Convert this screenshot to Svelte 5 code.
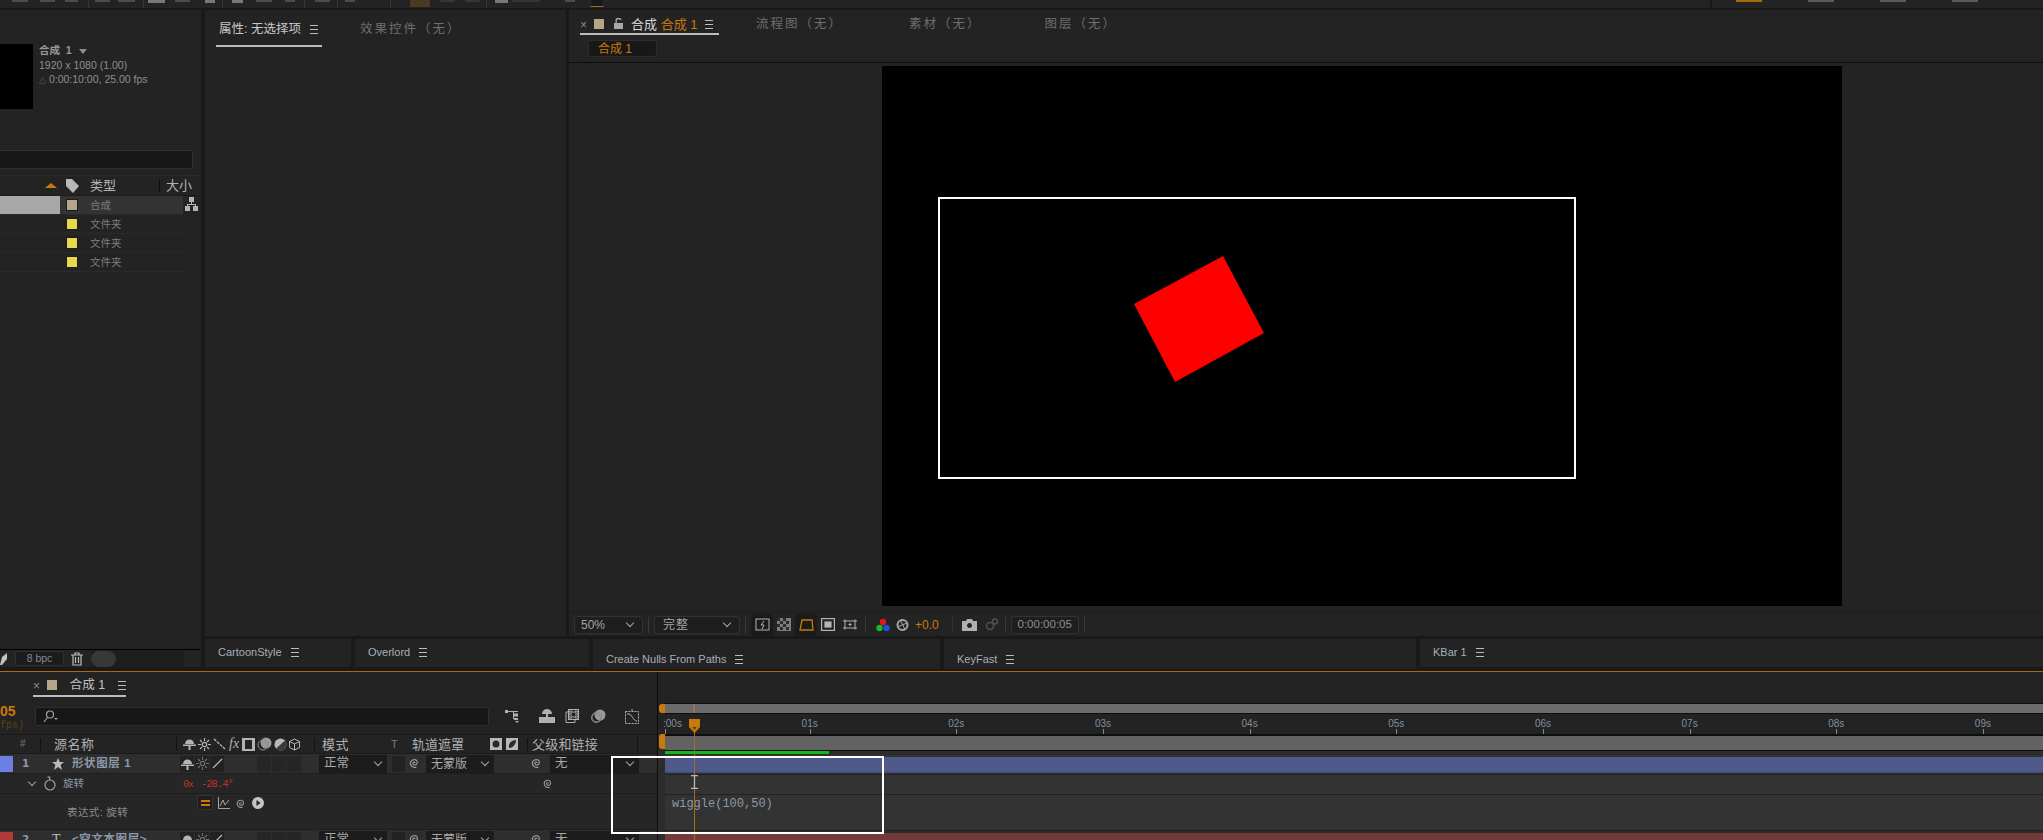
<script>
	const projectRows = [
		{ type: '合成', color: '#b5a68a', selected: true },
		{ type: '文件夹', color: '#e6d94a' },
		{ type: '文件夹', color: '#e6d94a' },
		{ type: '文件夹', color: '#e6d94a' }
	];
	const seconds = ['01s', '02s', '03s', '04s', '05s', '06s', '07s', '08s', '09s'];
	// bits of the top toolbar that stay visible above the crop: [start x, width, kind]
	const topBits = [
		[12, 16, ''], [40, 15, ''], [65, 13, ''], [88, 1, 'sep'], [95, 15, ''], [118, 17, ''], [143, 1, 'sep'],
		[148, 17, 'hi'], [175, 15, ''], [205, 10, 'hi'], [222, 1, 'sep'], [232, 11, 'hi'], [256, 16, ''], [285, 10, ''],
		[304, 1, 'sep'], [315, 15, ''], [337, 1, 'sep'], [345, 10, ''], [390, 1, 'sep'], [410, 20, 'brown'], [440, 15, 'dim'],
		[465, 15, 'dim'], [486, 1, 'sep'], [495, 13, 'hi'], [512, 28, 'dim'], [565, 10, '']
	];
	const placedBits = topBits.map(([x, w, kind], i) => {
		const prev = i ? topBits[i - 1][0] + topBits[i - 1][1] : 0;
		return { gap: x - prev, w, kind };
	});
</script>

{#snippet spiral(size)}
	<svg width={size} height={size} viewBox="0 0 14 14" fill="none" stroke="#9a9a9a" stroke-width="1.3">
		<path d="M7.5 7.5c0-1.2-2-1.2-2.2.3-.2 1.800 2.600 2.600 4 1 1.500-1.700.6-5-2.300-5C4 3.800 2.300 6 2.600 8.500 3 11.300 6 12.800 9 12" />
	</svg>
{/snippet}

{#snippet shy()}
	<svg width="13" height="12" viewBox="0 0 13 12" fill="#b4b4b4">
		<path d="M2 6a4.500 4.500 0 0 1 9 0z" /><rect x="0" y="6.500" width="13" height="1.500" /><rect x="5.500" y="8" width="2" height="4" />
	</svg>
{/snippet}

{#snippet sun(color)}
	<svg width="13" height="13" viewBox="0 0 13 13" fill="none" stroke={color} stroke-width="1.200">
		<circle cx="6.500" cy="6.500" r="2.200" /><path d="M6.500 0v3M6.500 10v3M0 6.500h3M10 6.500h3M2 2l2 2M9 9l2 2M2 11l2-2M9 4l2-2" />
	</svg>
{/snippet}

<div class="app">
	<div class="topbar">
		{#each placedBits as bit}
			<span class="bit {bit.kind}" style="margin-left: {bit.gap}px; width: {bit.w}px"></span>
		{/each}
		<span class="orange-box"></span>
		<span class="tb-right"><i class="o"></i><i></i><i></i><i></i></span>
	</div>

	<div class="main">
		<section class="panel project">
			<div class="info">
				<div class="thumb"></div>
				<div class="info-text">
					<div class="info-name">合成&nbsp; 1 <span class="caret"></span></div>
					<div>1920 x 1080 (1.00)</div>
					<div><span class="delta">△</span> 0:00:10:00, 25.00 fps</div>
				</div>
			</div>
			<div class="project-search"></div>
			<div class="project-head">
				<span class="sort"></span>
				<svg class="tag" width="13" height="14" viewBox="0 0 13 14" fill="#b8b8b8"><path d="M0 0h6l7 7-6 7-7-7z" /></svg>
				<span class="ptype">类型</span>
				<span class="psize">大小</span>
			</div>
			{#each projectRows as row}
				<div class="project-row" class:selected={row.selected}>
					<span class="pname"></span>
					<span class="pswatch" style="background: {row.color}"></span>
					<span class="ptext">{row.type}</span>
				</div>
			{/each}
			<svg class="tree" width="13" height="14" viewBox="0 0 13 14" fill="#b4b4b4">
				<rect x="4" y="0" width="5" height="5" /><rect x="0" y="9" width="5" height="5" /><rect x="8" y="9" width="5" height="5" /><path d="M6 5h1v2h4v2h-1V8H3v1H2V7h4z" />
			</svg>
			<div class="project-foot">
				<svg class="leaf" width="7" height="12" viewBox="0 0 7 12" fill="#c4c4c4"><path d="M7 0v6L2 12H0l2-8z" /></svg>
				<span class="bpc">8 bpc</span>
				<svg width="12" height="14" viewBox="0 0 12 14" fill="none" stroke="#bdbdbd" stroke-width="1.200">
					<path d="M0 3h12M4 3V1h4v2M2 3v10h8V3M4.500 5v6M7.500 5v6" />
				</svg>
				<span class="foot-strip"><span class="pill"></span></span>
			</div>
		</section>

		<div class="right">
			<div class="upper">
				<section class="panel props">
					<div class="prop-tabs">
						<span class="tab active prop-active">属性: 无选择项 <i class="menu"></i></span>
						<span class="tab-dim effect">效果控件（无）</span>
					</div>
				</section>

				<section class="panel viewer">
					<div class="viewer-tabs">
						<span class="tab active comp-tab">
							<span class="close">×</span>
							<span class="swatch"></span>
							<svg width="9" height="11" viewBox="0 0 9 11" fill="#a8a8a8"><path d="M0 5h9v6H0zM1.500 5V2.500a3 2.500 0 0 1 6-.5H6.200a1.800 1.300 0 0 0-3.400.5V5z" /></svg>
							<span class="comp-label">合成 <b>合成 1</b></span>
							<i class="menu"></i>
						</span>
						<span class="tab-dim flow">流程图（无）</span>
						<span class="tab-dim footage">素材（无）</span>
						<span class="tab-dim layer-tab">图层（无）</span>
					</div>
					<div class="crumb-row"><span class="crumb">合成 1</span></div>
					<div class="canvas">
						<div class="comp">
							<div class="comp-frame"></div>
							<svg class="shape" width="132" height="128" viewBox="0 0 132 128"><polygon points="89,0 130,77 41,126 0,48" fill="#ff0000" /></svg>
						</div>
					</div>
					<div class="viewer-tools">
						<span class="select zoom-sel">50%<i class="chev"></i></span>
						<span class="vsep"></span>
						<span class="select quality">完整<i class="chev"></i></span>
						<span class="vsep"></span>
						<span class="tool on">
							<svg width="15" height="14" viewBox="0 0 15 14" fill="none" stroke="#b4b4b4"><rect x="1" y="1" width="13" height="11" /><path d="M9 3L6 7h3l-2 4" /></svg>
						</span>
						<span class="tool">
							<svg width="14" height="13" viewBox="0 0 14 13"><rect width="14" height="13" fill="#7c7c7c" /><path d="M0 0h3v3H0zM6 0h3v3H6zM3 3h3v3H3zM9 3h3v3H9zM0 6h3v3H0zM6 6h3v3H6zM3 9h3v3H3zM9 9h3v3H9z" fill="#2c2c2c" /></svg>
						</span>
						<span class="tool on">
							<svg width="15" height="14" viewBox="0 0 15 14" fill="none" stroke="#c87a0a" stroke-width="1.300"><path d="M3 2h10l1 10H1z" /></svg>
						</span>
						<span class="tool">
							<svg width="14" height="13" viewBox="0 0 14 13" fill="none" stroke="#b4b4b4" stroke-width="1.200"><rect x=".6" y=".6" width="12.800" height="11.800" /><rect x="4" y="4" width="6" height="5" fill="#b4b4b4" /></svg>
						</span>
						<span class="tool">
							<svg width="14" height="14" viewBox="0 0 14 14" fill="none" stroke="#b4b4b4"><path d="M2 1.500v10M12 1.500v10M0 3h14M0 10h14M7 5v3M5.500 6.500h3" /></svg>
						</span>
						<span class="vsep tight"></span>
						<svg class="rgb" width="14" height="14" viewBox="0 0 14 14"><circle cx="7" cy="4" r="3.200" fill="#e01818" /><circle cx="3.500" cy="10" r="3.200" fill="#18b828" /><circle cx="10.500" cy="10" r="3.200" fill="#2050e0" /></svg>
						<svg class="aperture" width="13" height="14" viewBox="0 0 13 14" fill="none" stroke="#a4a4a4" stroke-width="2"><circle cx="6.500" cy="7" r="5" /><path d="M4 2l3 5M11 5L6 7M9 12L7 7M2 9l4-2" stroke-width="1" /></svg>
						<span class="exposure">+0.0</span>
						<span class="vsep expo-sep"></span>
						<svg class="camera" width="15" height="12" viewBox="0 0 15 12" fill="#b0b0b0"><path d="M0 2h4l1-2h5l1 2h4v10H0zM7.500 4a2.500 2.500 0 1 0 .01 0z" /></svg>
						<svg class="snap" width="15" height="13" viewBox="0 0 15 13" fill="none" stroke="#505050" stroke-width="1.500"><circle cx="6" cy="8" r="3.500" /><circle cx="11" cy="3.500" r="2.500" /></svg>
						<span class="vsep snap-sep"></span>
						<span class="timecode">0:00:00:05</span>
						<span class="vsep"></span>
					</div>
				</section>
			</div>

			<div class="docks">
				<div class="dock cartoon">CartoonStyle <i class="menu"></i></div>
				<div class="dock overlord">Overlord <i class="menu"></i></div>
				<div class="dock tall nulls">Create Nulls From Paths <i class="menu"></i></div>
				<div class="dock tall keyfast">KeyFast <i class="menu"></i></div>
				<div class="dock kbar">KBar 1 <i class="menu"></i></div>
			</div>
		</div>
	</div>

	<section class="timeline">
		<div class="tl-left">
			<div class="tl-tabrow">
				<span class="tab active tl-tab">
					<span class="close">×</span>
					<span class="swatch"></span>
					<span class="tl-name">合成 1</span>
					<i class="menu"></i>
				</span>
			</div>
			<div class="tl-searchrow">
				<div class="tl-time"><b>05</b><small>fps)</small></div>
				<div class="tl-search">
					<svg width="15" height="13" viewBox="0 0 15 13" fill="none" stroke="#a0a0a0" stroke-width="1.200"><circle cx="7" cy="4.500" r="3.500" /><path d="M4.500 7.500L1 12" /><path d="M11 8h4l-2 2z" fill="#a0a0a0" stroke="none" /></svg>
				</div>
				<svg class="ti ti-flow" width="15" height="14" viewBox="0 0 15 14" fill="#b0b0b0"><rect x="0" y="1" width="3" height="3" /><rect x="3" y="2" width="10" height="1" /><rect x="8" y="2" width="1" height="8" /><rect x="9" y="4.500" width="4" height="3" /><rect x="9" y="9" width="4" height="2" /><path d="M10 12h4l-2 2z" /></svg>
				<svg class="ti ti-shy" width="16" height="14" viewBox="0 0 16 14" fill="#b0b0b0"><path d="M3 5a5 5 0 0 1 10 0z" /><rect x="7" y="5" width="2" height="3" /><rect x="0" y="8" width="16" height="6" /></svg>
				<svg class="ti ti-film" width="14" height="14" viewBox="0 0 14 14" fill="none" stroke="#b0b0b0"><rect x="3.500" y=".5" width="10" height="10" /><path d="M6 .5v10M11 .5v10M6 3h5M6 8h5M3.500 3H1v10.500h9V10.500" /><path d="M4.500 2v8M12.500 2v8" stroke-dasharray="1.500 1" /></svg>
				<svg class="ti ti-motion" width="15" height="14" viewBox="0 0 15 14"><circle cx="9" cy="6" r="5.500" fill="#9a9a9a" /><circle cx="6" cy="8" r="5" fill="none" stroke="#8a8a8a" /><circle cx="5" cy="9" r="4.500" fill="none" stroke="#8a8a8a" /></svg>
				<svg class="ti ti-graph" width="14" height="15" viewBox="0 0 14 15" fill="none" stroke="#b0b0b0"><rect x=".5" y="2.500" width="13" height="12" stroke-dasharray="2 1" /><path d="M2 5h2c3 0 4 7 8 7" /><path d="M7 0v2" /></svg>
			</div>
			<div class="tl-head">
				<span class="col-num">#</span>
				<span class="col-src">源名称</span>
				<span class="col-sw">
					{@render shy()}
					{@render sun('#b4b4b4')}
					<svg width="13" height="12" viewBox="0 0 13 12" fill="none" stroke="#b4b4b4" stroke-width="1.300"><path d="M1 1l11 10" stroke-dasharray="3 1" /></svg>
					<em>fx</em>
					<svg width="13" height="13" viewBox="0 0 13 13" fill="#b4b4b4"><path d="M0 0h13v13H0zM3 2v9h7V2z" /></svg>
					<svg width="15" height="14" viewBox="0 0 15 14"><circle cx="9" cy="6" r="5.500" fill="#9a9a9a" /><circle cx="6" cy="8" r="5" fill="none" stroke="#8a8a8a" /></svg>
					<svg width="13" height="13" viewBox="0 0 13 13"><circle cx="6.500" cy="6.500" r="6" fill="#b8b8b8" /><path d="M11 2.500L2 10.500a6 6 0 0 0 9-8z" fill="#3a3a3a" /></svg>
					<svg width="11" height="13" viewBox="0 0 11 13" fill="none" stroke="#b4b4b4"><path d="M5.500 1l5 2.500v6l-5 2.500-5-2.500v-6zM.5 3.500l5 2.500 5-2.500M5.500 6v6" /></svg>
				</span>
				<span class="col-mode">模式</span>
				<span class="col-t">T</span>
				<span class="col-matte">轨道遮罩</span>
				<span class="col-mat-icons">
					<svg width="12" height="12" viewBox="0 0 12 12"><rect width="12" height="12" fill="#b8b8b8" /><circle cx="6" cy="6" r="3.500" fill="#2a2a2a" /></svg>
					<svg width="12" height="12" viewBox="0 0 12 12"><rect width="12" height="12" fill="#b8b8b8" /><path d="M10 2C5 2 2 6 3 10c4 0 7-4 7-8z" fill="#2a2a2a" /></svg>
				</span>
				<span class="col-parent">父级和链接</span>
				<span class="col-end"></span>
			</div>

			<div class="layer">
				<span class="label blue"></span>
				<span class="lnum">1</span>
				<svg class="lstar" width="12" height="12" viewBox="0 0 12 12" fill="#bcbcbc"><path d="M6 0l1.700 4H12L8.600 6.800 10 12 6 9l-4 3 1.400-5.200L0 4h4.300z" /></svg>
				<span class="lname">形状图层 1</span>
				<span class="sw-boxes">
					<span class="sbox">{@render shy()}</span>
					<span class="sbox">{@render sun('#6e6e6e')}</span>
					<span class="sbox"><svg width="11" height="11" viewBox="0 0 11 11" stroke="#bcbcbc" stroke-width="1.200"><path d="M1 10L10 1" /></svg></span>
				</span>
				<span class="empties"><i></i><i></i><i></i></span>
				<span class="dd dd-mode">正常<i class="chev"></i></span>
				<span class="tbox"></span>
				<span class="lspiral">{@render spiral(13)}</span>
				<span class="dd dd-matte">无蒙版<i class="chev"></i></span>
				<span class="lspiral2">{@render spiral(13)}</span>
				<span class="dd dd-parent">无<i class="chev"></i></span>
			</div>

			<div class="prop-row">
				<i class="down"></i>
				<svg class="watch" width="12" height="15" viewBox="0 0 12 15" fill="none" stroke="#a0a0a0" stroke-width="1.200"><circle cx="6" cy="9" r="5" /><path d="M3.500 1h3M5 1l1 3" /></svg>
				<span class="pr-name">旋转</span>
				<span class="pr-val">0<small>x</small> -28.4°</span>
				<span class="pr-spiral">{@render spiral(12)}</span>
			</div>

			<div class="expr-row">
				<span class="expr-name">表达式: 旋转</span>
				<span class="expr-icons">
					<span class="eqbox"><i></i><i></i></span>
					<svg width="12" height="12" viewBox="0 0 12 12" fill="none" stroke="#a4a4a4"><path d="M.5 0v11.500H12M2 9l3-6 2 5 4-5" /></svg>
					{@render spiral(12)}
					<svg width="12" height="12" viewBox="0 0 12 12"><circle cx="6" cy="6" r="6" fill="#c4c4c4" /><path d="M4.500 3l4 3-4 3z" fill="#222" /></svg>
				</span>
			</div>

			<div class="layer">
				<span class="label red"></span>
				<span class="lnum">2</span>
				<span class="lt">T</span>
				<span class="lname">&lt;空文本图层&gt;</span>
				<span class="sw-boxes">
					<span class="sbox">{@render shy()}</span>
					<span class="sbox">{@render sun('#6e6e6e')}</span>
					<span class="sbox"><svg width="11" height="11" viewBox="0 0 11 11" stroke="#bcbcbc" stroke-width="1.200"><path d="M1 10L10 1" /></svg></span>
				</span>
				<span class="empties"><i></i><i></i><i></i></span>
				<span class="dd dd-mode">正常<i class="chev"></i></span>
				<span class="tbox"></span>
				<span class="lspiral">{@render spiral(13)}</span>
				<span class="dd dd-matte">无蒙版<i class="chev"></i></span>
				<span class="lspiral2">{@render spiral(13)}</span>
				<span class="dd dd-parent">无<i class="chev"></i></span>
			</div>
		</div>

		<div class="tl-right">
			<div class="navbar"></div>
			<div class="ruler">
				<span class="sec first">:00s</span>
				{#each seconds as s}
					<span class="sec">{s}</span>
				{/each}
			</div>
			<div class="workbar"></div>
			<div class="green"></div>
			<div class="track t1"><div class="bar"></div></div>
			<div class="track t2"></div>
			<div class="track t3"><span class="wiggle">wiggle(100,50)</span></div>
			<div class="redbar"></div>
		</div>

		<span class="handle h1"></span>
		<span class="handle h2"></span>
		<span class="nav-mark"></span>
		<span class="playline"></span>
		<svg class="playhead" width="11" height="14" viewBox="0 0 11 14"><path d="M0 0h11v8l-5.500 6L0 8z" fill="#c87a0a" /><path d="M3.500 8h4l-2 3z" fill="#5a3a08" /></svg>
		<svg class="ibeam" width="7" height="14" viewBox="0 0 7 14" fill="none" stroke="#b8b8b8" stroke-width="1.300"><path d="M0 .7h7M0 13.300h7M3.500 1v12" /></svg>
		<div class="callout"></div>
	</section>
</div>

<style>
	:global(body) {
		margin: 0;
		background: #191919;
	}
	.app {
		width: 2043px;
		height: 840px;
		overflow: hidden;
		background: #191919;
		color: #a8a8a8;
		font-family: 'Liberation Sans', 'Noto Sans CJK SC', sans-serif;
		font-size: 11px;
		line-height: 1;
	}
	i, em { font-style: normal; }
	.panel { background: #232323; position: relative; }
	.menu {
		display: inline-block;
		width: 8px;
		height: 7px;
		margin-left: 6px;
		border-top: 1px solid #bcbcbc;
		border-bottom: 1px solid #bcbcbc;
		background: linear-gradient(#bcbcbc, #bcbcbc) center / 100% 1px no-repeat;
		vertical-align: -1px;
	}
	.chev {
		width: 5px;
		height: 5px;
		border-right: 1px solid #a8a8a8;
		border-bottom: 1px solid #a8a8a8;
		transform: rotate(45deg);
		margin-left: auto;
		margin-top: -3px;
	}

	/* top toolbar, cut off by the screenshot */
	.topbar {
		height: 8px;
		background: #232323;
		display: flex;
		align-items: flex-start;
		overflow: hidden;
	}
	.bit { height: 2px; background: #4c4c4c; flex: none; }
	.bit.hi { height: 3px; background: #777; }
	.bit.dim { background: #363636; }
	.bit.brown { height: 7px; background: #4a3a1e; }
	.bit.sep { height: 8px; background: #353535; }
	.orange-box {
		width: 14px;
		height: 7px;
		margin-left: 15px;
		border: 1px solid #2a2a2a;
		border-top: 0;
		background: #191919;
		flex: none;
		box-sizing: border-box;
		border-bottom-color: #a86a10;
	}
	.tb-right {
		display: flex;
		gap: 46px;
		margin-left: 1106px;
		border-left: 2px solid #191919;
		padding-left: 24px;
		height: 8px;
	}
	.tb-right i { width: 26px; height: 2px; background: #5a5a5a; }
	.tb-right i.o { background: #a86a10; }

	.main {
		display: flex;
		gap: 4px;
		height: 659px;
		margin-top: 2px;
	}
	.right { flex: 1; min-width: 0; display: flex; flex-direction: column; gap: 3px; }
	.upper { flex: 1; display: flex; gap: 3px; min-height: 0; }

	/* project panel */
	.project { width: 201px; height: 657px; flex: none; display: flex; flex-direction: column; }
	.info { display: flex; gap: 6px; padding-top: 34px; }
	.thumb { width: 33px; height: 65px; background: #000; }
	.info-text { font-size: 10.500px; display: flex; flex-direction: column; gap: 3px; color: #8e8e8e; padding-top: 1px; }
	.info-name { color: #989898; font-weight: bold; height: 12px; }
	.delta { font-size: 7px; }
	.caret {
		display: inline-block;
		border: 4px solid transparent;
		border-top: 5px solid #8e8e8e;
		border-bottom: 0;
		margin-left: 4px;
	}
	.project-search {
		width: 193px;
		height: 19px;
		margin-top: 41px;
		background: #171717;
		border: 1px solid #303030;
		border-left: 0;
		border-radius: 0 2px 2px 0;
		box-sizing: border-box;
	}
	.project-head {
		height: 19px;
		margin-top: 6px;
		border-top: 1px solid #2c2c2c;
		border-bottom: 1px solid #1c1c1c;
		display: flex;
		align-items: center;
		position: relative;
		font-size: 13px;
		color: #b4b4b4;
		box-sizing: content-box;
	}
	.sort {
		border: 6px solid transparent;
		border-bottom: 5px solid #c87a0a;
		border-top: 0;
		margin-left: 45px;
		height: 0;
	}
	.tag { margin-left: 9px; }
	.ptype { margin-left: 11px; }
	.psize { margin-left: 43px; padding-left: 6px; border-left: 1px solid #111; }
	.project-row {
		width: 183px;
		height: 19px;
		box-sizing: border-box;
		border-bottom: 1px solid #2a2a2a;
		display: flex;
		align-items: center;
		font-size: 10.500px;
		color: #7d7d7d;
	}
	.project-row.selected { background: #333; }
	.pname { width: 60px; height: 100%; flex: none; }
	.selected .pname { background: #a8a8a8; }
	.pswatch { width: 10px; height: 10px; margin-left: 7px; outline: 1px solid #1c1c1c; }
	.ptext { margin-left: 13px; }
	.tree { position: absolute; left: 185px; top: 187px; }
	.project-foot {
		margin-top: auto;
		height: 18px;
		width: 200px;
		border-top: 1px solid #000;
		display: flex;
		align-items: center;
		box-sizing: border-box;
	}
	.bpc {
		width: 49px;
		height: 15px;
		margin-left: 8px;
		margin-right: 7px;
		border: 1px solid #2f2f2f;
		border-radius: 2px;
		box-sizing: border-box;
		background: #1c1c1c;
		display: flex;
		align-items: center;
		justify-content: center;
		color: #7f8a96;
		font-size: 10.500px;
	}
	.foot-strip {
		width: 93px;
		height: 16px;
		margin-left: 8px;
		background: #1e1e1e;
	}
	.pill { display: block; width: 25px; height: 16px; background: #383838; border-radius: 8px; }

	/* properties panel */
	.props { width: 361px; flex: none; }
	.prop-tabs { display: flex; padding-top: 13px; height: 26px; align-items: flex-start; position: relative; }
	.tab { font-size: 12.500px; color: #c8c8c8; white-space: nowrap; }
	.tab-dim { font-size: 12.500px; color: #6e6e6e; white-space: nowrap; letter-spacing: 2px; }
	.prop-active {
		margin-left: 11px;
		width: 106px;
		padding: 0 0 9px 3px;
		height: 24px;
		box-sizing: border-box;
		border-bottom: 2px solid #bcbcbc;
	}
	.effect { margin-left: 38px; }

	/* composition viewer */
	.viewer { flex: 1; min-width: 0; display: flex; flex-direction: column; }
	.viewer-tabs { height: 27px; display: flex; align-items: flex-start; padding-left: 11px; padding-top: 8px; box-sizing: border-box; }
	.comp-tab {
		width: 139px;
		height: 17px;
		box-sizing: border-box;
		border-bottom: 2px solid #bcbcbc;
		display: flex;
		align-items: flex-start;
		white-space: nowrap;
	}
	.comp-tab svg { margin: 0 0 0 10px; }
	.close { color: #8a8a8a; font-size: 12px; width: 8px; margin-right: 6px; line-height: 14px; }
	.swatch { width: 10px; height: 10px; background: #b5a68a; display: block; flex: none; margin-top: 1px; }
	.comp-label { margin-left: 8px; font-size: 13px; color: #d8d8d8; }
	.comp-label b { font-weight: normal; color: #c87a0a; }
	.comp-tab .menu { margin-left: 8px; margin-top: 2px; }
	.flow { margin-left: 37px; }
	.footage { margin-left: 66px; }
	.layer-tab { margin-left: 63px; }
	.crumb-row {
		height: 26px;
		border-bottom: 1px solid #0d0d0d;
		box-sizing: border-box;
		padding: 3px 0 0 19px;
	}
	.crumb {
		display: flex;
		align-items: center;
		width: 69px;
		height: 17px;
		box-sizing: border-box;
		padding-left: 9px;
		background: #181818;
		border: 1px solid #2c2c2c;
		border-radius: 2px;
		color: #c87a0a;
		font-size: 12px;
	}
	.canvas { flex: 1; min-height: 0; padding: 3px 0 0 313px; }
	.comp { width: 960px; height: 540px; background: #000; position: relative; }
	.comp-frame {
		position: absolute;
		left: 56px;
		top: 131px;
		width: 638px;
		height: 282px;
		border: 2px solid #fff;
		box-sizing: border-box;
	}
	.shape { position: absolute; left: 252px; top: 190px; }
	.viewer-tools {
		height: 24px;
		border-top: 1px solid #1c1c1c;
		box-sizing: border-box;
		display: flex;
		align-items: center;
		padding-left: 5px;
		flex: none;
	}
	.select {
		height: 18px;
		box-sizing: border-box;
		display: flex;
		align-items: center;
		padding: 0 9px 0 6px;
		border: 1px solid #333;
		border-radius: 3px;
		background: #1e1e1e;
		color: #a4a4a4;
		font-size: 12px;
		flex: none;
	}
	.zoom-sel { width: 69px; }
	.quality { width: 86px; padding-left: 8px; letter-spacing: 1px; }
	.vsep { width: 1px; height: 16px; background: #3a3a3a; margin: 0 5px; flex: none; }
	.vsep.tight { margin: 0 4px 0 4px; }
	.tool { width: 22px; height: 22px; display: flex; align-items: center; justify-content: center; flex: none; }
	.tool.on { background: #1b1b1b; border-radius: 2px; }
	.rgb { margin-left: 6px; }
	.aperture { margin-left: 6px; }
	.exposure { margin-left: 6px; color: #c87a0a; font-size: 12px; }
	.expo-sep { margin-left: 13px; margin-right: 0; background: #303030; }
	.camera { margin-left: 9px; }
	.snap { margin-left: 7px; }
	.snap-sep { margin-left: 6px; }
	.timecode {
		width: 68px;
		height: 18px;
		box-sizing: border-box;
		border: 1px solid #333;
		border-radius: 3px;
		background: #1e1e1e;
		display: flex;
		align-items: center;
		justify-content: center;
		color: #8e8e8e;
		font-size: 11.500px;
		flex: none;
	}

	/* bottom dock tabs */
	.docks { display: flex; gap: 4px; height: 30px; align-items: flex-start; flex: none; }
	.dock {
		height: 28px;
		background: #232323;
		box-sizing: border-box;
		padding: 8px 0 0 13px;
		color: #a8b0b8;
		font-size: 11px;
		white-space: nowrap;
		flex: none;
	}
	.dock.tall { height: 30px; padding-top: 15px; }
	.cartoon { width: 146px; }
	.overlord { width: 234px; }
	.nulls { width: 347px; }
	.keyfast { width: 472px; }
	.kbar { flex: 1; }

	/* timeline */
	.timeline {
		margin-top: 2px;
		height: 168px;
		border-top: 1px solid #a86a18;
		background: #232323;
		display: flex;
		position: relative;
		overflow: hidden;
	}
	.tl-left { width: 657px; flex: none; border-right: 1px solid #0c0c0c; }
	.tl-tabrow { height: 28px; padding: 7px 0 0 33px; box-sizing: border-box; }
	.tl-tab {
		width: 93px;
		height: 18px;
		box-sizing: border-box;
		border-bottom: 2px solid #bcbcbc;
		display: flex;
		align-items: flex-start;
	}
	.tl-name { margin-left: 13px; font-size: 12.500px; color: #c0c0c0; }
	.tl-tab .menu { margin-left: 13px; margin-top: 2px; }
	.tl-searchrow { height: 35px; position: relative; display: flex; padding-top: 7px; box-sizing: border-box; border-bottom: 1px solid #1a1a1a; }
	.tl-time { width: 35px; flex: none; margin-top: -3px; }
	.tl-time b { display: block; color: #c87a0a; font-size: 14px; }
	.tl-time small { display: block; margin-top: 3px; font-size: 10px; color: #5e4010; font-family: 'Liberation Mono', monospace; }
	.tl-search {
		width: 454px;
		height: 19px;
		background: #171717;
		border: 1px solid #2e2e2e;
		border-radius: 2px;
		box-sizing: border-box;
		padding: 2px 0 0 7px;
		flex: none;
	}
	.ti { flex: none; margin-top: 2px; }
	.ti-flow { margin-left: 16px; }
	.ti-shy { margin-left: 19px; }
	.ti-film { margin-left: 10px; }
	.ti-motion { margin-left: 12px; }
	.ti-graph { margin-left: 19px; }
	.tl-head {
		display: flex;
		align-items: center;
		font-size: 13px;
		color: #b0b0b0;
		white-space: nowrap;
		border-bottom: 1px solid #1a1a1a;
		box-sizing: content-box;
		height: 18px;
	}
	.tl-head > span { flex: none; box-sizing: border-box; }
	.col-num { width: 40px; padding-left: 20px; font-size: 10px; color: #7a7a7a; border-left: 0; }
	.col-src { width: 136px; padding-left: 13px; border-left: 1px solid #111; letter-spacing: .5px; }
	.col-sw { width: 138px; display: flex; align-items: center; gap: 2px; padding-left: 6px; border-left: 1px solid #111; }
	.col-sw em { font-family: 'Liberation Serif', serif; font-style: italic; font-size: 14px; margin: 0 1px; }
	.col-mode { width: 76px; padding-left: 7px; border-left: 1px solid #111; letter-spacing: .5px; }
	.col-t { width: 22px; font-size: 11px; color: #6f7f8f; padding-left: 1px; }
	.col-matte { width: 77px; }
	.col-mat-icons { width: 38px; display: flex; gap: 4px; padding-left: 1px; }
	.col-parent { width: 110px; padding-left: 4px; border-left: 1px solid #111; letter-spacing: .2px; }
	.col-end { width: 10px; height: 14px; border-left: 1px solid #111; }

	.tl-left .layer {
		height: 20px;
		background: #2e2e2e;
		border-bottom: 1px solid #1e1e1e;
		box-sizing: border-box;
		display: flex;
		align-items: center;
		white-space: nowrap;
	}
	.tl-left .layer > * { flex: none; }
	.label { width: 13px; height: 16px; }
	.label.blue { background: #6d7fe0; }
	.label.red { background: #b03a3a; }
	.lnum { width: 31px; padding-left: 9px; box-sizing: border-box; font-family: 'DejaVu Sans', sans-serif; font-size: 10.500px; font-weight: bold; color: #8c98a8; }
	.lstar { margin-left: 8px; }
	.lt { width: 12px; margin-left: 8px; font-family: 'Liberation Serif', serif; font-size: 14px; color: #bcbcbc; }
	.lname { width: 109px; margin-left: 7px; padding-left: 1px; box-sizing: border-box; font-size: 11.500px; font-weight: bold; color: #8c98a8; letter-spacing: .6px; }
	.sw-boxes { display: flex; gap: 1px; }
	.sbox { width: 14px; height: 16px; background: #222; display: flex; align-items: center; justify-content: center; }
	.empties { display: flex; gap: 1px; margin-left: 33px; }
	.empties i { width: 14px; height: 16px; background: #262626; }
	.dd {
		height: 18px;
		background: #1c1c1c;
		display: flex;
		align-items: center;
		box-sizing: border-box;
		padding: 0 6px 0 5px;
		font-size: 12.500px;
		color: #a8a8a8;
	}
	.dd-mode { width: 68px; margin-left: 18px; }
	.tbox { width: 13px; height: 16px; background: #222; margin-left: 5px; }
	.lspiral { margin-left: 3px; width: 18px; }
	.dd-matte { width: 68px; font-size: 12px; }
	.lspiral2 { margin-left: 36px; width: 20px; }
	.dd-parent { width: 89px; }

	.prop-row {
		height: 20px;
		background: #262626;
		border-bottom: 1px solid #1e1e1e;
		box-sizing: border-box;
		display: flex;
		align-items: center;
		position: relative;
	}
	.down {
		width: 5px;
		height: 5px;
		margin: -3px 0 0 29px;
		border-right: 1px solid #a0a0a0;
		border-bottom: 1px solid #a0a0a0;
		transform: rotate(45deg);
	}
	.watch { margin-left: 9px; }
	.pr-name { margin-left: 7px; font-size: 10.500px; color: #8c98a8; }
	.pr-val { position: absolute; left: 183px; top: 5px; color: #c8302c; font-family: 'Liberation Mono', monospace; font-size: 10.500px; letter-spacing: -1px; }
	.pr-val small { font-size: 9px; margin-right: 3px; }
	.pr-spiral { position: absolute; left: 542px; top: 3px; }
	.expr-row { height: 36px; background: #262626; border-bottom: 1px solid #1e1e1e; box-sizing: border-box; position: relative; }
	.expr-name { position: absolute; left: 67px; top: 13px; font-size: 10.500px; color: #8c8c8c; letter-spacing: .4px; }
	.expr-icons { position: absolute; left: 197px; top: 1px; display: flex; align-items: center; gap: 5px; }
	.eqbox {
		width: 16px;
		height: 15px;
		box-sizing: border-box;
		background: #1e1e1e;
		border: 1px solid #333;
		display: flex;
		flex-direction: column;
		align-items: center;
		justify-content: center;
		gap: 2px;
	}
	.eqbox i { width: 9px; height: 2px; background: #c87a0a; }

	.tl-right { flex: 1; min-width: 0; padding-left: 7px; background: linear-gradient(#232323, #232323) top / 100% 62px no-repeat, #2c2c2c; overflow: hidden; }
	.navbar { height: 11px; margin-top: 31px; background: #6b6b6b; border-top: 1px solid #0d0d0d; border-bottom: 1px solid #0d0d0d; box-sizing: border-box; }
	.ruler { height: 20px; margin-top: 0; display: flex; background: #232323; width: 1600px; font-family: 'Liberation Sans', sans-serif; font-size: 10px; color: #8090a0; }
	.sec { width: 146.670px; flex: none; text-align: center; position: relative; padding-top: 5px; box-sizing: border-box; }
	.sec::after { content: ''; position: absolute; left: 50%; bottom: 0; width: 1px; height: 5px; background: #8a8a8a; }
	.sec.first { width: 73.330px; text-align: left; margin-left: -2px; padding-left: 0; }
	.sec.first::after { left: 2px; }
	.workbar { height: 17px; background: #626262; border-top: 2px solid #0d0d0d; border-bottom: 1px solid #0d0d0d; box-sizing: border-box; }
	.green { width: 164px; height: 3px; background: #14b81c; }
	.track { background: #333; border-bottom: 1px solid #222; box-sizing: border-box; }
	.t1 { height: 20px; margin-top: 1px; padding-top: 2px; }
	.bar { height: 15px; background: #505a8a; border-bottom: 1px solid #3e4878; }
	.t2 { height: 20px; }
	.t3 { height: 36px; padding: 3px 0 0 7px; }
	.wiggle { font-family: 'Liberation Mono', monospace; font-size: 12px; color: #8e9aa6; }
	.redbar { height: 9px; margin-top: 2px; background: #733a3a; }

	.handle { position: absolute; left: 659px; width: 6px; background: #c87a0a; border-radius: 3px 0 0 3px; }
	.h1 { top: 32px; height: 9px; }
	.h2 { top: 62px; height: 15px; }
	.nav-mark { position: absolute; left: 693px; top: 32px; width: 2px; height: 9px; background: #8a7a5a; }
	.playline { position: absolute; left: 694px; top: 58px; bottom: 0; width: 1px; background: #a86a18; }
	.playhead { position: absolute; left: 689px; top: 47px; }
	.ibeam { position: absolute; left: 691px; top: 103px; }
	.callout {
		position: absolute;
		left: 611px;
		top: 84px;
		width: 273px;
		height: 78px;
		border: 2px solid #fff;
		box-sizing: border-box;
	}
</style>
